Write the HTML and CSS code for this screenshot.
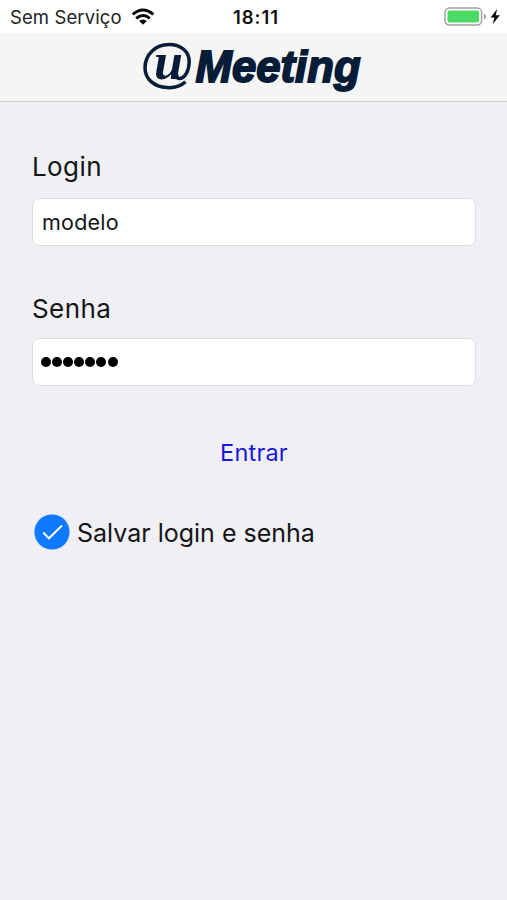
FILE: index.html
```html
<!DOCTYPE html>
<html lang="pt-BR">
<head>
<meta charset="utf-8">
<title>uMeeting</title>
<link rel="stylesheet" href="styles.css">
</head>
<body>
<div class="status">
  <div class="carrier"><span class="service">Sem Serviço</span>
    <svg class="wifi" width="24" height="18" viewBox="0 0 24 18" aria-hidden="true"><g fill="none" stroke="#050505" stroke-width="3"><path d="M1.7 6.3Q12-2.3 22.3 6.3"/><path d="M5.2 10.3Q12 4.6 18.8 10.3"/></g><path d="M8.2 13Q12 10 15.8 13L12 16.7Z" fill="#050505"/></svg>
  </div>
  <div class="time">18:11</div>
  <svg class="battery" width="58" height="20" viewBox="0 0 58 20" aria-hidden="true"><rect x="1" y="1" width="36.6" height="17" rx="4.5" fill="#fff" stroke="#a3a3a7" stroke-width="1.5"/><rect x="3.5" y="3.5" width="31.6" height="12" rx="2" fill="#4cd964"/><path d="M39.8 6.5q2.4.8 2.4 3t-2.4 3z" fill="#a3a3a7"/><path d="M53.2 2L46.6 10.6H50.5L48.7 17.2L55.8 8.2H51.7Z" fill="#050505"/></svg>
</div>
<header class="bar">
  <svg class="logo" width="230" height="60" viewBox="0 0 230 60" role="img">
    <path d="M46.5 46.8C41.5 51.5 35 53 28 52.6C15 52 6 44 6 32.7C6 19.5 16.5 9.5 30 9.5C42 9.5 50.2 16.5 50.2 26.5C50.2 36 45.5 43.5 40.5 43.5C38 43.5 37.3 41.5 38 39" fill="none" stroke="#071c36" stroke-width="3.5"/>
    <text class="logo-u" x="15" y="44">u</text>
    <text class="logo-name" x="56.6" y="47" textLength="165" lengthAdjust="spacingAndGlyphs">Meeting</text>
  </svg>
</header>
<main class="form">
  <label class="label login-label" for="login">Login</label>
  <input class="field" id="login" type="text" value="modelo">
  <label class="label senha-label" for="senha">Senha</label>
  <div class="field password" id="senha"><i></i><i></i><i></i><i></i><i></i><i></i><i></i></div>
  <button class="enter" type="button">Entrar</button>
  <div class="save">
    <svg width="36" height="36" viewBox="0 0 36 36" aria-hidden="true"><circle cx="18" cy="18" r="17.6" fill="#107aff"/><path d="M9.2 18.5L15 24.3L28 11.5" fill="none" stroke="#fff" stroke-width="1.9"/></svg>
    <span>Salvar login e senha</span>
  </div>
</main>
</body>
</html>
```
FILE: styles.css
```css
* { box-sizing: border-box; }
body {
  margin: 0;
  min-height: 900px;
  background: #efeff4;
  color: #151518;
  font-family: Inter, "Liberation Sans", sans-serif;
}
.status {
  display: grid;
  grid-template-columns: 1fr auto 1fr;
  align-items: center;
  height: 33px;
  padding: 1px 5px 0 10px;
  background: #fff;
}
.carrier { display: flex; align-items: center; gap: 9px; }
.service { font-size: 18.5px; letter-spacing: 0.1px; line-height: 32px; color: #222; }
.time { font-size: 18.5px; font-weight: 600; letter-spacing: 1px; color: #111; }
.battery { justify-self: end; }
.bar {
  display: flex;
  justify-content: center;
  height: 69px;
  padding-top: 2px;
  background: #f5f5f5;
  border-bottom: 1px solid #d3d3d6;
}
.logo { overflow: visible; }
.logo-u { font: italic bold 52px "Liberation Serif", serif; fill: #071c36; }
.logo-name {
  font: italic bold 43.5px "Liberation Sans", sans-serif;
  fill: #071c36;
  stroke: #071c36;
  stroke-width: 1.8;
}
.form { display: flex; flex-direction: column; padding: 49px 31px 0 32px; }
.label { font-size: 26px; line-height: 32px; letter-spacing: 0.4px; }
.field {
  display: flex;
  align-items: center;
  width: 100%;
  height: 48px;
  padding: 0 9px;
  border: 1px solid #dedee2;
  border-radius: 7px;
  background: #fff;
  color: #151518;
  font: 21.5px Inter, sans-serif;
  letter-spacing: 0.2px;
}
.login-label { margin-bottom: 15px; }
.senha-label { margin: 47px 0 13px; }
.password { gap: 1.1px; padding-left: 8px; }
.password i { width: 10px; height: 10px; border-radius: 50%; background: #000; }
.enter {
  align-self: center;
  margin-top: 50px;
  padding: 0;
  border: 0;
  background: none;
  color: #1a16d6;
  font: 23.5px/34px Inter, sans-serif;
  letter-spacing: 0.2px;
}
.save { display: flex; align-items: center; gap: 7px; margin: 43px 0 0 2px; font-size: 25px; line-height: 36px; }
.save span { padding-top: 2px; }
```
